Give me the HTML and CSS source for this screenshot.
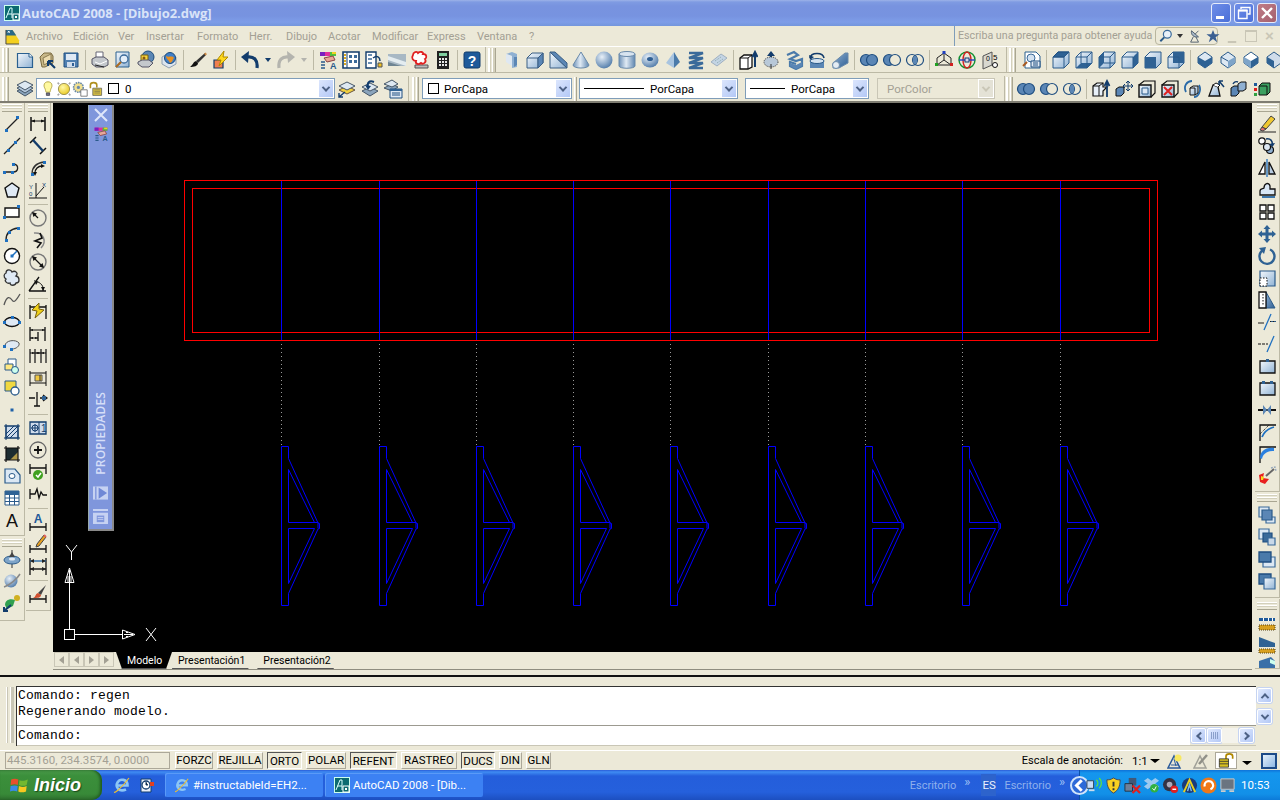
FILE: index.html
```html
<!DOCTYPE html>
<html lang="es">
<head>
<meta charset="utf-8">
<title>AutoCAD 2008 - [Dibujo2.dwg]</title>
<link rel="stylesheet" href="styles.css">
</head>
<body>
<svg class="defs" width="0" height="0" aria-hidden="true">
<defs>
<linearGradient id="gb" x1="0" y1="0" x2="1" y2="1"><stop offset="0" stop-color="#f4f8fc"/><stop offset="1" stop-color="#8fb2d4"/></linearGradient>
<linearGradient id="gd" x1="0" y1="0" x2="1" y2="1"><stop offset="0" stop-color="#8fb0d2"/><stop offset="1" stop-color="#2f5f94"/></linearGradient>
<linearGradient id="gg" x1="0" y1="0" x2="1" y2="0"><stop offset="0" stop-color="#6d91b8"/><stop offset=".45" stop-color="#e0eaf4"/><stop offset="1" stop-color="#5f86b0"/></linearGradient>
<radialGradient id="gs" cx=".38" cy=".32" r=".75"><stop offset="0" stop-color="#e8f0f8"/><stop offset="1" stop-color="#4a76a6"/></radialGradient>
<radialGradient id="gy" cx=".4" cy=".35" r=".7"><stop offset="0" stop-color="#fff8a8"/><stop offset="1" stop-color="#e8c820"/></radialGradient>

<symbol id="ie" viewBox="0 0 18 18"><path d="M4 9.500H14.500C14.500 3 7 2 4.500 6.500C2 11 6 16.500 13 13.500" fill="none" stroke="#8cc6f6" stroke-width="2.600"/><path d="M2 16C0 18 7 14 16 2" stroke="#f0c030" fill="none" stroke-width="1.200"/></symbol>
<symbol id="acad" viewBox="0 0 16 16"><rect width="16" height="16" fill="#0c6a70"/><rect x=".5" y=".5" width="15" height="15" fill="none" stroke="#cfe"/><path d="M2 13L6 3H8V13M3.500 9H8" stroke="#dff" fill="none"/><path d="M9 9H15V15H9Z" fill="none" stroke="#fff"/><rect x="11" y="11" width="2" height="2" fill="#fff"/></symbol>
<symbol id="new" viewBox="0 0 20 20"><path d="M2.500 3.500H14L17.500 7V17.500H2.500Z" fill="url(#gb)" stroke="#2a6090" stroke-width="1.200"/><path d="M14 3.500V7H17.500" fill="#fff" stroke="#2a6090"/></symbol>
<symbol id="open" viewBox="0 0 20 20"><path d="M2 7L6 3H13L15 6V13L7 17H4Z" fill="#c8b888" stroke="#7a6a40"/><path d="M5 8L13 4V11L6 15Z" fill="#ecdcae" stroke="#8a7a50"/><path d="M10 11L17 18M10 11V16M10 11H15" stroke="#123c6c" stroke-width="2" fill="none"/></symbol>
<symbol id="save" viewBox="0 0 20 20"><path d="M3 3H17V17H3Z" fill="#4f7fb0" stroke="#1f4e80"/><path d="M5 4H15V10H5Z" fill="#dfe9f4"/><path d="M6 12H14V17H6Z" fill="#cfdcec"/><path d="M11 13H13V16H11Z" fill="#2f5f94"/></symbol>
<symbol id="print" viewBox="0 0 20 20"><path d="M6 2H13V8H6Z" fill="#fff" stroke="#667"/><path d="M2 9L6 7H14L18 10V15L14 17H6L2 14Z" fill="#c4c8cc" stroke="#556"/><path d="M5 12L10 14L17 11" stroke="#fff" fill="none"/><path d="M5 15L14 17" stroke="#222" fill="none"/></symbol>
<symbol id="prev" viewBox="0 0 20 20"><path d="M3 2H16V17H3Z" fill="url(#gb)" stroke="#2a6090"/><circle cx="11" cy="9" r="4" fill="#e4eef8" stroke="#3a6a9a" stroke-width="1.300"/><path d="M8 12L3 17" stroke="#aa6a20" stroke-width="2.200"/></symbol>
<symbol id="pub" viewBox="0 0 20 20"><circle cx="12" cy="7" r="6" fill="#5a86b4" stroke="#1d4c7c"/><path d="M5 5H12V11H5Z" fill="#f6d43c" stroke="#7a6010"/><circle cx="8" cy="8" r="1.500" fill="#8a5a10"/><path d="M2 12L6 10H13L17 13L13 17H6L2 14Z" fill="#c4c8cc" stroke="#556"/></symbol>
<symbol id="web" viewBox="0 0 20 20"><path d="M3 7L10 3L17 7V14L10 18L3 14Z" fill="#dde5ee" stroke="#90a0b0"/><circle cx="11" cy="8" r="5.500" fill="#3f7fc8" stroke="#1d4c7c"/><path d="M7 6C10 8 13 5 15 8C13 10 14 12 11 13C10 10 7 9 7 6Z" fill="#e89020"/></symbol>
<symbol id="brush" viewBox="0 0 20 20"><path d="M17 3L8 11L10 13L18 5Z" fill="#333"/><path d="M17 3L18 5" stroke="#c84" stroke-width="2"/><path d="M8 11C5 12 5 15 2 17C6 17 10 16 10 13Z" fill="#111"/></symbol>
<symbol id="match" viewBox="0 0 20 20"><path d="M3 10H12V18H3Z" fill="#f08050" stroke="#123c6c" stroke-width="1.200"/><path d="M13 1L6 10H10L8 16L17 7H12Z" fill="#ffd81c" stroke="#b08a00"/></symbol>
<symbol id="undo" viewBox="0 0 20 20"><path d="M17 18C18 10 14 6 7 7" stroke="#123c6c" stroke-width="3.200" fill="none"/><path d="M9 1L1 7L8 13Z" fill="#123c6c"/></symbol>
<symbol id="redo" viewBox="0 0 20 20"><path d="M3 18C2 10 6 6 13 7" stroke="#b4b4ae" stroke-width="3.200" fill="none"/><path d="M11 1L19 7L12 13Z" fill="#b4b4ae"/></symbol>
<symbol id="dc" viewBox="0 0 20 20"><path d="M2 2H18V6H2Z" fill="#e0309c"/><path d="M2 2H7V6H2Z" fill="#7820c0"/><path d="M12 2H18V6H12Z" fill="#50c040"/><path d="M14 2H18V4H14Z" fill="#f0d020"/><path d="M6 8L15 6L17 10L9 12Z" fill="#e8a898" stroke="#844"/><path d="M3 12H7M3 15H7M3 18H7" stroke="#2a5a8a" stroke-width="1.400"/><text x="12" y="19" font-family="Liberation Sans" font-size="9" font-weight="700" fill="#2a5a8a">A</text></symbol>
<symbol id="prop" viewBox="0 0 20 20"><path d="M2 2H18V18H2Z" fill="#fff" stroke="#123c6c" stroke-width="1.600"/><path d="M6 2V18" stroke="#123c6c"/><path d="M4 4V16" stroke="#d8a820" stroke-width="2" stroke-dasharray="2 1"/><path d="M8 5H11V8H8ZM13 5H16V8H13ZM8 10H11V13H8ZM13 10H16V13H13Z" fill="#3a6a9a"/></symbol>
<symbol id="tool" viewBox="0 0 20 20"><path d="M2 2H12V18H2Z" fill="#fff" stroke="#123c6c" stroke-width="1.400"/><path d="M4 5H8M4 9H8M4 13H8" stroke="#3a6a9a" stroke-width="1.500"/><path d="M9 8C13 5 16 7 16 11" stroke="#123c6c" stroke-width="1.500" fill="none"/><path d="M14 13H18V17H14Z" fill="#f0c020" stroke="#555"/></symbol>
<symbol id="sheet" viewBox="0 0 20 20"><path d="M1 4H19V16H1Z" fill="#a8b8c4"/><path d="M1 6L19 12V16L1 10Z" fill="#e4ecf0"/><path d="M1 12L14 16H1Z" fill="#6e8492"/></symbol>
<symbol id="mark" viewBox="0 0 20 20"><path d="M5 15H18V18H5Z" fill="#bbb" stroke="#555"/><path d="M3 5C3 2 7 1 8 3C10 1 14 2 13 4C17 4 17 8 15 9C17 12 13 15 11 13C9 15 5 14 6 11C3 11 1 8 3 5Z" fill="#fff" stroke="#e02020" stroke-width="1.800"/></symbol>
<symbol id="calc" viewBox="0 0 20 20"><path d="M4 1H16V19H4Z" fill="#222"/><path d="M6 3H14V6H6Z" fill="#80d0a0"/><path d="M6 8H8V10H6ZM9 8H11V10H9ZM12 8H14V10H12ZM6 11H8V13H6ZM9 11H11V13H9ZM12 11H14V13H12ZM6 14H8V16H6ZM9 14H11V16H9ZM12 14H14V16H12Z" fill="#e8e8e8"/></symbol>
<symbol id="help" viewBox="0 0 20 20"><rect x="2" y="2" width="16" height="16" rx="2" fill="#1f5a9a" stroke="#123c6c"/><text x="10" y="16" text-anchor="middle" font-family="Liberation Sans" font-size="14" font-weight="700" fill="#fff">?</text></symbol>

<symbol id="psolid" viewBox="0 0 20 20"><path d="M4 4L10 2L15 4V17L10 18V6L4 4Z" fill="#8fb0d2"/><path d="M4 4V12L10 16V6Z" fill="#dfe8f2"/><path d="M12 7L15 7V15L12 17Z" fill="#5b86b5"/></symbol>
<symbol id="box" viewBox="0 0 20 20"><path d="M2 8L7 3H18V13L13 18H2Z" fill="url(#gb)" stroke="#3a5e84"/><path d="M2 8H13V18" fill="none" stroke="#3a5e84"/><path d="M13 8L18 3V13L13 18Z" fill="#5b86b5" stroke="#3a5e84"/></symbol>
<symbol id="wedge" viewBox="0 0 20 20"><path d="M2 2V18H19Z" fill="url(#gb)" stroke="#3a5e84"/><path d="M2 2L7 2L19 13V18Z" fill="#5b86b5" stroke="#3a5e84"/></symbol>
<symbol id="cone" viewBox="0 0 20 20"><path d="M10 2L2 15C2 19 18 19 18 15Z" fill="url(#gg)" stroke="#6a8aaa"/></symbol>
<symbol id="sphere" viewBox="0 0 20 20"><circle cx="10" cy="10" r="8.500" fill="url(#gs)"/></symbol>
<symbol id="cyl" viewBox="0 0 20 20"><path d="M2 4V16C2 19 18 19 18 16V4Z" fill="url(#gg)" stroke="#6a8aaa"/><ellipse cx="10" cy="4" rx="8" ry="2.500" fill="#d8e4f0" stroke="#6a8aaa"/></symbol>
<symbol id="torus" viewBox="0 0 20 20"><ellipse cx="10" cy="10" rx="8.500" ry="7.500" fill="url(#gs)"/><ellipse cx="10" cy="9" rx="3" ry="2" fill="#2f5f94"/></symbol>
<symbol id="pyr" viewBox="0 0 20 20"><path d="M11 2L3 13L11 18Z" fill="#a8c4e0"/><path d="M11 2L17 12L11 18Z" fill="#4a7aaa"/></symbol>
<symbol id="helix" viewBox="0 0 20 20"><path d="M3 3H17L3 8H17L3 13H17L3 18H17" fill="none" stroke="#3a6a9a" stroke-width="2.400"/></symbol>
<symbol id="planar" viewBox="0 0 20 20"><path d="M2 12L12 4L18 8L8 16Z" fill="#c4d4e4" stroke="#a0b0c0"/><path d="M6 11L12 7M8 13L14 9" stroke="#8aa" stroke-dasharray="1 1"/></symbol>
<symbol id="extr" viewBox="0 0 20 20"><path d="M2 8L6 5H14V17L10 19H2Z" fill="#fff" stroke="#111" stroke-width="1.300"/><path d="M2 8H10V19M10 8L14 5" fill="none" stroke="#111"/><path d="M17 17V3M14.500 7L17 2L19.500 7" fill="none" stroke="#123c6c" stroke-width="2"/></symbol>
<symbol id="press" viewBox="0 0 20 20"><path d="M10 1L6 6H14Z" fill="#123c6c"/><path d="M10 5V11" stroke="#123c6c" stroke-width="2"/><ellipse cx="10" cy="12" rx="7" ry="5" fill="#b8c8d8" stroke="#333" stroke-dasharray="1 1"/><path d="M10 19V14" stroke="#333"/></symbol>
<symbol id="sweep" viewBox="0 0 20 20"><path d="M3 5L10 2L14 5L6 9L12 11L18 9V16L12 19L6 16V12L12 14" fill="none" stroke="#4a7aaa" stroke-width="2.200"/><path d="M6 13L12 15L18 12V16L12 19L6 16Z" fill="#5b86b5"/></symbol>
<symbol id="rev" viewBox="0 0 20 20"><path d="M3 8C4 2 16 2 17 8" fill="none" stroke="#123c6c" stroke-width="1.600"/><path d="M2 5L3 10L7 7Z" fill="#123c6c"/><path d="M3 11H17V18H3Z" fill="#5b86b5"/><ellipse cx="10" cy="11" rx="7" ry="2.500" fill="#d4e2f0" stroke="#2a5a8a"/></symbol>
<symbol id="loft" viewBox="0 0 20 20"><path d="M3 13L15 3H18V13L9 18H3Z" fill="url(#gd)" stroke="#6a8aaa"/><ellipse cx="6" cy="15" rx="3.500" ry="3.500" fill="#e4ecf4" stroke="#6a8aaa"/></symbol>
<symbol id="union" viewBox="0 0 20 20"><circle cx="7" cy="10" r="5.500" fill="#5b86b5" stroke="#1f4e80" stroke-width="1.200"/><circle cx="13" cy="10" r="5.500" fill="#5b86b5" stroke="#1f4e80" stroke-width="1.200"/></symbol>
<symbol id="subt" viewBox="0 0 20 20"><circle cx="7" cy="10" r="5.500" fill="#5b86b5" stroke="#1f4e80" stroke-width="1.200"/><circle cx="13" cy="10" r="5.500" fill="#ece9d8" stroke="#1f4e80" stroke-width="1.200"/></symbol>
<symbol id="inter" viewBox="0 0 20 20"><circle cx="7" cy="10" r="5.500" fill="#ece9d8" stroke="#1f4e80" stroke-width="1.200"/><circle cx="13" cy="10" r="5.500" fill="none" stroke="#1f4e80" stroke-width="1.200"/><path d="M10 5.500A5.500 5.500 0 0 1 10 14.500A5.500 5.500 0 0 1 10 5.500Z" fill="#5b86b5"/></symbol>
<symbol id="giz" viewBox="0 0 20 20"><path d="M10 3L17 8V15H3V8Z" fill="none" stroke="#222"/><path d="M10 10V3M10 10L3 15M10 10L17 15" stroke="#222"/><rect x="8.500" y="1" width="3" height="3" fill="#2040c0"/><rect x="16" y="13" width="3" height="3" fill="#d02020"/><rect x="1" y="13" width="3" height="3" fill="#20a020"/></symbol>
<symbol id="wrld" viewBox="0 0 20 20"><ellipse cx="10" cy="10" rx="8" ry="8" fill="none" stroke="#109030" stroke-width="1.400"/><ellipse cx="10" cy="10" rx="4" ry="8" fill="none" stroke="#d02020" stroke-width="1.400"/><path d="M2 10H18" stroke="#2040c0" stroke-width="1.400"/><rect x="8" y="8" width="4" height="4" fill="#d8d8f0" stroke="#123c6c"/></symbol>
<symbol id="flat" viewBox="0 0 20 20"><path d="M3 6L12 2V15L3 19Z" fill="#d8d8d0" stroke="#555"/><text x="6" y="11" font-family="Liberation Sans" font-size="7" fill="#000">0</text><circle cx="15" cy="15" r="2.500" fill="#fff" stroke="#111"/><text x="13" y="10" font-family="Liberation Sans" font-size="8" fill="#000">5</text></symbol>

<symbol id="cam" viewBox="0 0 20 20"><path d="M3 2H14L18 6V18H3Z" fill="#fff" stroke="#2a6090"/><circle cx="9" cy="8" r="4" fill="#d4e2f0" stroke="#3a6a9a"/><path d="M5 12L1 16" stroke="#aa5a20" stroke-width="2"/><path d="M9 11H18V17H9Z" fill="#dfe9f4" stroke="#1f4e80"/><path d="M11 13H16M11 15H16" stroke="#1f4e80"/></symbol>
<symbol id="vt" viewBox="0 0 20 20"><path d="M2 7V18H13L18 13V2H7Z" fill="url(#gb)" stroke="#2a5a8a"/><path d="M2 7L7 2H18L13 7Z" fill="#2f6294" stroke="#1f4e80"/><path d="M2 7H13V18M13 7L18 2" fill="none" stroke="#2a5a8a"/></symbol>
<symbol id="vb" viewBox="0 0 20 20"><path d="M2 7V18H13L18 13V2H7Z" fill="url(#gb)" stroke="#2a5a8a"/><path d="M2 18L7 13H18L13 18Z" fill="#2f6294"/><path d="M2 7H13V18M7 2V13M13 7L18 2" fill="none" stroke="#2a5a8a"/></symbol>
<symbol id="vl" viewBox="0 0 20 20"><path d="M2 7V18H13L18 13V2H7Z" fill="url(#gb)" stroke="#2a5a8a"/><path d="M2 7L7 2V13L2 18Z" fill="#2f6294"/><path d="M2 7H13V18M7 13H18M13 7L18 2" fill="none" stroke="#2a5a8a"/></symbol>
<symbol id="vr" viewBox="0 0 20 20"><path d="M2 7V18H13L18 13V2H7Z" fill="url(#gb)" stroke="#2a5a8a"/><path d="M13 7L18 2V13L13 18Z" fill="#2f6294"/><path d="M2 7H13V18M2 7L7 2" fill="none" stroke="#2a5a8a"/></symbol>
<symbol id="vf" viewBox="0 0 20 20"><path d="M2 7V18H13L18 13V2H7Z" fill="url(#gb)" stroke="#2a5a8a"/><path d="M2 7H13V18H2Z" fill="#2f6294"/></symbol>
<symbol id="vk" viewBox="0 0 20 20"><path d="M2 7V18H13L18 13V2H7Z" fill="url(#gb)" stroke="#2a5a8a"/><path d="M7 2H18V13H7Z" fill="#2f6294"/><path d="M2 7H13V18" fill="none" stroke="#2a5a8a"/></symbol>
<symbol id="iso1" viewBox="0 0 20 20"><path d="M10 2L17 7V13L10 18L3 13V7Z" fill="#dde8f2" stroke="#2a5a8a"/><path d="M3 7L10 11L17 7V13L10 18L3 13Z" fill="#2f6294"/></symbol>
<symbol id="iso2" viewBox="0 0 20 20"><path d="M10 2L17 7V13L10 18L3 13V7Z" fill="#dde8f2" stroke="#2a5a8a"/><path d="M10 11L17 7V13L10 18Z" fill="#7ea4c8"/><path d="M3 7L10 11" stroke="#2a5a8a"/></symbol>
<symbol id="iso3" viewBox="0 0 20 20"><path d="M10 2L17 7V13L10 18L3 13V7Z" fill="#fff" stroke="#2a5a8a"/><path d="M3 7L10 11V18L3 13Z" fill="#7ea4c8"/><path d="M10 11L17 7V13L10 18Z" fill="#2f6294"/></symbol>
<symbol id="iso4" viewBox="0 0 20 20"><path d="M10 2L17 7V13L10 18L3 13V7Z" fill="#cfdcea" stroke="#2a5a8a"/><path d="M3 7L10 11V18L3 13Z" fill="#2f6294"/></symbol>

<symbol id="layers" viewBox="0 0 20 20"><path d="M2 12L10 8L18 12L10 17Z" fill="#8aa4bc" stroke="#456"/><path d="M2 9L10 5L18 9L10 14Z" fill="#b4c8dc" stroke="#456"/><path d="M2 6L10 2L18 6L10 11Z" fill="#dde8f2" stroke="#456"/></symbol>
<symbol id="lcur" viewBox="0 0 20 20"><path d="M2 11L10 7L18 11L10 15Z" fill="#f0d040" stroke="#654"/><path d="M2 7L10 3L18 7L10 11Z" fill="#dde8f2" stroke="#456"/><path d="M2 18L8 13M2 14V18H6" stroke="#123c6c" stroke-width="1.400" fill="none"/></symbol>
<symbol id="lprev" viewBox="0 0 20 20"><path d="M2 12L10 8L18 12L10 17Z" fill="#8aa4bc" stroke="#456"/><path d="M2 8L10 4L18 8L10 12Z" fill="#dde8f2" stroke="#456"/><path d="M14 3C9 1 7 4 8 8" stroke="#123c6c" stroke-width="2" fill="none"/><path d="M5 6L8 11L11 7Z" fill="#123c6c"/></symbol>
<symbol id="lstate" viewBox="0 0 20 20"><path d="M1 9L9 5L15 8L9 12Z" fill="#8aa4bc" stroke="#456"/><path d="M1 5L9 1L15 5L9 8Z" fill="#dde8f2" stroke="#456"/><path d="M7 10H19V19H7Z" fill="#dfe9f4" stroke="#1f4e80"/><path d="M7 10H19V12H7Z" fill="#2f6294"/><path d="M9 14H17M9 16H17" stroke="#1f4e80"/></symbol>
<symbol id="bulb" viewBox="0 0 20 20"><path d="M10 1C5 1 4 6 6 9C7 11 7 13 7.500 14H12.500C13 13 13 11 14 9C16 6 15 1 10 1Z" fill="#fff9a0" stroke="#a89830"/><path d="M8 15H12V18H8Z" fill="#778" stroke="#445"/></symbol>
<symbol id="sun" viewBox="0 0 20 20"><circle cx="10" cy="10" r="7" fill="url(#gy)" stroke="#8a8040"/><path d="M2 2L4 4M18 2L16 4M2 18L4 16M18 18L16 16" stroke="#a8a8a8" stroke-width="2"/></symbol>
<symbol id="frz" viewBox="0 0 20 20"><circle cx="8" cy="8" r="6" fill="#f2e090" stroke="#6a8aaa" stroke-dasharray="2 1" stroke-width="2"/><circle cx="8" cy="8" r="2" fill="#6a8aaa"/><path d="M11 11H19V19H11Z" fill="#fff" stroke="#666"/></symbol>
<symbol id="lock" viewBox="0 0 20 20"><path d="M3 9V5C3 1 11 1 11 5V8" fill="none" stroke="#b09020" stroke-width="2"/><path d="M6 9H17V18H6Z" fill="#d8c040" stroke="#665"/><path d="M8 11H15M8 13H15M8 15H15" stroke="#665" stroke-width=".7"/></symbol>

<symbol id="ln" viewBox="0 0 20 20"><path d="M4 16L16 4" stroke="#222" stroke-width="1.300"/><path d="M3 15H6V18H3ZM14 2H17V5H14Z" fill="#1f70c0"/></symbol>
<symbol id="xl" viewBox="0 0 20 20"><path d="M2 18L18 2" stroke="#222" stroke-width="1.300"/><path d="M5 13H8V16H5ZM12 5H15V8H12Z" fill="#1f70c0"/></symbol>
<symbol id="pl" viewBox="0 0 20 20"><path d="M4 14H11M11 14C17 14 17 7 12 6" fill="none" stroke="#222" stroke-width="1.300"/><path d="M1 13H4V16H1ZM9 13H12V16H9ZM10 5H13V8H10Z" fill="#1f70c0"/></symbol>
<symbol id="pg" viewBox="0 0 20 20"><path d="M10 3L17 8L14.500 17H5.500L3 8Z" fill="#dfe9f4" stroke="#111" stroke-width="1.400"/></symbol>
<symbol id="rc" viewBox="0 0 20 20"><path d="M3 6H17V15H3Z" fill="#fff" stroke="#111" stroke-width="1.400"/><path d="M1 14H4V17H1ZM15 3H18V6H15Z" fill="#1f70c0"/></symbol>
<symbol id="ar" viewBox="0 0 20 20"><path d="M4 16C4 9 9 5 16 4" fill="none" stroke="#222" stroke-width="1.400"/><path d="M3 15H6V18H3ZM15 3H18V6H15ZM6 7H9V10H6Z" fill="#1f70c0"/></symbol>
<symbol id="ci" viewBox="0 0 20 20"><circle cx="10" cy="10" r="7.500" fill="#fff" stroke="#111" stroke-width="1.400"/><path d="M10 10L15 5" stroke="#1f70c0" stroke-width="1.500"/><path d="M8.500 8.500H11.500V11.500H8.500Z" fill="#1f70c0"/></symbol>
<symbol id="cl" viewBox="0 0 20 20"><path d="M4 5C4 1 9 1 10 4C13 2 17 5 14 8C18 9 18 15 14 15C13 18 8 18 8 15C5 16 2 13 4 11C1 9 2 6 4 5Z" fill="#dfe9f4" stroke="#333" stroke-width="1.300"/></symbol>
<symbol id="sp" viewBox="0 0 20 20"><path d="M2 15C5 5 8 7 10 10C12 14 15 9 18 4" fill="none" stroke="#555" stroke-width="1.300"/></symbol>
<symbol id="el" viewBox="0 0 20 20"><ellipse cx="10" cy="10" rx="7.500" ry="4.500" fill="#dfe9f4" stroke="#111" stroke-width="1.300"/><path d="M1 9H4V12H1ZM16 9H19V12H16ZM9 4H12V7H9Z" fill="#1f70c0"/></symbol>
<symbol id="ea" viewBox="0 0 20 20"><path d="M3 12C3 6 14 5 17 9C18 12 14 15 10 15" fill="#dfe9f4" stroke="#555"/><path d="M1 11H4V14H1ZM8 14H11V17H8Z" fill="#1f70c0"/></symbol>
<symbol id="ins" viewBox="0 0 20 20"><path d="M6 3H14V12H6Z" fill="#fff" stroke="#2a5a8a"/><path d="M3 8H11V14H3Z" fill="#ffe880" stroke="#2a5a8a"/><circle cx="13" cy="14" r="3.500" fill="#cfe" stroke="#2a5a8a"/></symbol>
<symbol id="blk" viewBox="0 0 20 20"><path d="M3 3H14V13H3Z" fill="#f0d840" stroke="#2a5a8a"/><circle cx="13" cy="13" r="4" fill="#fff" stroke="#2a5a8a" stroke-width="1.300"/></symbol>
<symbol id="pt" viewBox="0 0 20 20"><path d="M8.500 8.500H11.500V11.500H8.500Z" fill="#1f60a8"/></symbol>
<symbol id="hat" viewBox="0 0 20 20"><path d="M4 4H16V16H4Z" fill="#cfdcec" stroke="#123c6c" stroke-width="1.200"/><path d="M4 16L16 4M4 12L12 4M8 16L16 8" stroke="#123c6c"/><path d="M2 4H18M2 16H18M4 2V18M16 2V18" stroke="#123c6c"/></symbol>
<symbol id="grd" viewBox="0 0 20 20"><path d="M4 4H16V16H4Z" fill="#1d2c30"/><path d="M8 16L16 8V16Z" fill="#b09848"/><path d="M2 4H18M2 16H18M4 2V18M16 2V18" stroke="#111" stroke-width="1.200"/></symbol>
<symbol id="reg" viewBox="0 0 20 20"><path d="M3 3H13L18 9V17H3Z" fill="#dce8f4" stroke="#2a5a8a" stroke-width="1.200"/><ellipse cx="10" cy="10" rx="3" ry="2.500" fill="#fff" stroke="#2a5a8a"/></symbol>
<symbol id="tbl" viewBox="0 0 20 20"><path d="M3 3H17V17H3Z" fill="#fff" stroke="#2a5a8a"/><path d="M3 3H17V7H3Z" fill="#2f6294"/><path d="M3 10H17M3 13.500H17M7.500 7V17M12.500 7V17" stroke="#2a5a8a"/></symbol>
<symbol id="txt" viewBox="0 0 20 20"><text x="10" y="17" text-anchor="middle" font-family="Liberation Sans" font-size="18" fill="#111">A</text></symbol>
<symbol id="orb" viewBox="0 0 20 20"><path d="M10 1V19" stroke="#333"/><ellipse cx="10" cy="11" rx="8" ry="4" fill="#7ea4c8" stroke="#2a5a8a"/><path d="M7 8H13L10 3Z" fill="#444"/><ellipse cx="10" cy="10" rx="3" ry="1.500" fill="#dfe9f4"/></symbol>
<symbol id="plan" viewBox="0 0 20 20"><circle cx="9" cy="10" r="6.500" fill="url(#gs)"/><path d="M2 16C8 14 15 8 18 3" stroke="#888" stroke-width="1.500" fill="none"/></symbol>
<symbol id="walk" viewBox="0 0 20 20"><path d="M3 12C3 7 8 5 13 7L11 13L5 16Z" fill="#30a050"/><circle cx="15" cy="5" r="3" fill="#d0b020"/><path d="M2 18L9 12M2 14V18H6" stroke="#123c6c" stroke-width="2" fill="none"/></symbol>

<symbol id="d1" viewBox="0 0 20 20"><path d="M3 3V17M17 3V17" stroke="#111" stroke-width="1.500"/><path d="M3 7H17" stroke="#111"/><path d="M3 7L7 5.500V8.500ZM17 7L13 5.500V8.500Z" fill="#111"/></symbol>
<symbol id="d2" viewBox="0 0 20 20"><path d="M2 7L8 1M12 18L18 12" stroke="#111" stroke-width="1.500"/><path d="M5 4L15 15" stroke="#123c6c" stroke-width="2.400"/></symbol>
<symbol id="d3" viewBox="0 0 20 20"><path d="M4 16C4 9 9 5 16 4" fill="none" stroke="#333" stroke-width="1.300"/><path d="M7 15C7 11 10 8 14 8" fill="none" stroke="#111" stroke-width="1.300"/><path d="M3 15H6V18H3ZM15 3H18V6H15Z" fill="#1f70c0"/><path d="M5 14L9 14L7 18ZM13 6L13 10L17 8Z" fill="#111"/></symbol>
<symbol id="d4" viewBox="0 0 20 20"><path d="M1 18H19M8 3V18" stroke="#111"/><path d="M8 16L16 7" stroke="#111"/><text x="1" y="9" font-family="Liberation Sans" font-size="6" fill="#123c6c">Y</text><text x="14" y="7" font-family="Liberation Sans" font-size="6" fill="#123c6c">X</text><text x="1" y="16" font-family="Liberation Sans" font-size="6" fill="#123c6c">0</text></symbol>
<symbol id="d5" viewBox="0 0 20 20"><circle cx="10" cy="10" r="8" fill="none" stroke="#777" stroke-width="1.400"/><path d="M10 10L5 5" stroke="#111" stroke-width="1.300"/><path d="M4 4L9 5.500L5.500 9Z" fill="#111"/></symbol>
<symbol id="d6" viewBox="0 0 20 20"><path d="M6 3C16 2 19 12 13 18" fill="none" stroke="#888" stroke-width="1.500"/><path d="M12 3L14 8L7 11L13 13L9 18" fill="none" stroke="#111" stroke-width="1.600"/></symbol>
<symbol id="d7" viewBox="0 0 20 20"><circle cx="10" cy="10" r="8" fill="none" stroke="#777" stroke-width="1.400"/><path d="M5 5L15 15" stroke="#111" stroke-width="1.300"/><path d="M4 4L9 5.500L5.500 9ZM16 16L11 14.500L14.500 11Z" fill="#111"/></symbol>
<symbol id="d8" viewBox="0 0 20 20"><path d="M1 17H18M1 17L11 3" stroke="#111" stroke-width="1.300"/><path d="M8 7C13 9 16 12 15 17" fill="none" stroke="#111"/><path d="M6 6L10 8L8 11ZM15 17L13 13L17 13Z" fill="#111"/></symbol>
<symbol id="d9" viewBox="0 0 20 20"><path d="M2 3V17M18 3V17M2 5H18" stroke="#111" stroke-width="1.300"/><path d="M11 1L4 8L9 9L7 16L16 8L11 7Z" fill="#f0d018" stroke="#776010"/></symbol>
<symbol id="d10" viewBox="0 0 20 20"><path d="M2 3V17M10 8V17M17 3V17" stroke="#111" stroke-width="1.300"/><path d="M2 6H17M2 14H10" stroke="#111"/><path d="M2 6L5 5V7ZM17 6L14 5V7ZM2 14L5 13V15ZM10 14L7 13V15Z" fill="#111"/></symbol>
<symbol id="d11" viewBox="0 0 20 20"><path d="M2 3V17M7 3V17M13 3V17M18 3V17" stroke="#111" stroke-width="1.200"/><path d="M2 7H18" stroke="#111"/><path d="M7 7L4 6V8ZM7 7L10 6V8ZM13 7L10 6V8ZM13 7L16 6V8Z" fill="#111"/></symbol>
<symbol id="d12" viewBox="0 0 20 20"><path d="M2 3V18M18 3V18M2 5H18M2 15H18" stroke="#111"/><path d="M7 7H14V13H7Z" fill="#f0c840" stroke="#555"/><path d="M11 8H13M11 10H13M11 12H13" stroke="#333"/></symbol>
<symbol id="d13" viewBox="0 0 20 20"><path d="M1 8H7M12 8H19M15 5L19 8L15 11M9 2V16M6 16H12" stroke="#111" stroke-width="1.300" fill="none"/><path d="M14 6H18V10H14Z" fill="#2f6294"/></symbol>
<symbol id="d14" viewBox="0 0 20 20"><path d="M2 4H18V16H2Z" fill="#cfdcec" stroke="#123c6c" stroke-width="1.300"/><path d="M11 4V16" stroke="#123c6c"/><circle cx="7" cy="10" r="3" fill="none" stroke="#123c6c"/><path d="M7 6V14M3 10H11" stroke="#123c6c"/><text x="13" y="14" font-family="Liberation Sans" font-size="10" fill="#123c6c">1</text></symbol>
<symbol id="d15" viewBox="0 0 20 20"><circle cx="10" cy="10" r="8" fill="none" stroke="#666" stroke-width="1.300"/><path d="M10 6V14M6 10H14" stroke="#111" stroke-width="1.800"/></symbol>
<symbol id="d16" viewBox="0 0 20 20"><path d="M2 2V12M18 2V12M2 6H18" stroke="#111" stroke-width="1.300"/><circle cx="10" cy="13" r="5" fill="#40a020"/><path d="M8 13L10 15L13 11" stroke="#fff" stroke-width="1.500" fill="none"/></symbol>
<symbol id="d17" viewBox="0 0 20 20"><path d="M2 5V15M2 10H7L9 5L11 14L13 8L15 11H19" fill="none" stroke="#111" stroke-width="1.300"/></symbol>
<symbol id="d18" viewBox="0 0 20 20"><path d="M2 11V19M18 11V19M2 15H18" stroke="#111" stroke-width="1.300"/><text x="10" y="11" text-anchor="middle" font-family="Liberation Sans" font-size="12" font-weight="700" fill="#1f5a9a">A</text></symbol>
<symbol id="d19" viewBox="0 0 20 20"><path d="M2 11V19M18 11V19M2 15H18" stroke="#111" stroke-width="1.300"/><path d="M16 1L18 3L11 12L8 13L9 10Z" fill="#e8a020" stroke="#444"/><path d="M16 1L18 3" stroke="#e06060" stroke-width="2"/></symbol>
<symbol id="d20" viewBox="0 0 20 20"><path d="M2 2V19M18 2V19" stroke="#111" stroke-width="1.300"/><path d="M2 5H18" stroke="#2a6aa8" stroke-width="1.400"/><path d="M2 13H18" stroke="#111" stroke-width="1.400"/><path d="M2 5L6 3V7ZM18 5L14 3V7ZM2 13L6 11V15ZM18 13L14 11V15Z" fill="#222"/></symbol>
<symbol id="d21" viewBox="0 0 20 20"><path d="M2 11V19M18 11V19M2 15H18" stroke="#111" stroke-width="1.300"/><path d="M18 1L10 9L13 11Z" fill="#444"/><path d="M10 9C7 10 8 13 5 14C9 14 13 14 13 11Z" fill="#d05030"/></symbol>

<symbol id="r1" viewBox="0 0 20 20"><path d="M14 2L18 5L9 15L5 13Z" fill="#f0c830" stroke="#444"/><path d="M5 13L9 15L6 17L3 16Z" fill="#e07070" stroke="#444"/><path d="M1 18H19" stroke="#222"/></symbol>
<symbol id="r2" viewBox="0 0 20 20"><circle cx="5" cy="5" r="3.200" fill="#fff" stroke="#111" stroke-width="1.200"/><circle cx="13" cy="14" r="3.500" fill="#8fb0d2" stroke="#111" stroke-width="1.200"/><circle cx="10" cy="11" r="3.500" fill="#dfe9f4" stroke="#111" stroke-width="1.200"/><path d="M9 3C14 2 16 6 15 9" stroke="#123c6c" stroke-width="1.500" fill="none"/><path d="M12 8L15.500 11L18 7Z" fill="#123c6c"/></symbol>
<symbol id="r3" viewBox="0 0 20 20"><path d="M8 4L2 16H8Z" fill="#fff" stroke="#111" stroke-width="1.300"/><path d="M12 4L18 16H12Z" fill="#b8cce0" stroke="#111" stroke-width="1.300"/><path d="M10 1V19" stroke="#1f70c0" stroke-width="1.300"/></symbol>
<symbol id="r4" viewBox="0 0 20 20"><path d="M3 15V11C3 8 6 9 7 8C7 3 12 2 13 6V9H18V15Z" fill="#d8e6f4" stroke="#111" stroke-width="1.300"/><path d="M5 17H18" stroke="#2a6aa8" stroke-width="1.800"/></symbol>
<symbol id="r5" viewBox="0 0 20 20"><path d="M3 3H9V9H3ZM11 3H17V9H11ZM3 11H9V17H3ZM11 11H17V17H11Z" fill="#fff" stroke="#111" stroke-width="1.300"/></symbol>
<symbol id="r6" viewBox="0 0 20 20"><path d="M10 1L13.500 5H11.500V8.500H15V6.500L19 10L15 13.500V11.500H11.500V15H13.500L10 19L6.500 15H8.500V11.500H5V13.500L1 10L5 6.500V8.500H8.500V5H6.500Z" fill="#2f6294"/></symbol>
<symbol id="r7" viewBox="0 0 20 20"><path d="M6 4A7.500 7.500 0 1 0 13 3.500" fill="none" stroke="#2f6294" stroke-width="2.400"/><path d="M2 2L9 1L7 8Z" fill="#2f6294"/></symbol>
<symbol id="r8" viewBox="0 0 20 20"><path d="M3 3H18V18H3Z" fill="url(#gb)" stroke="#2a5a8a" stroke-width="1.200"/><path d="M3 10H10V18H3Z" fill="#fff" stroke="#111" stroke-dasharray="1.500 1.500"/></symbol>
<symbol id="r9" viewBox="0 0 20 20"><path d="M9 2L18 18H9Z" fill="url(#gd)" stroke="#2a5a8a"/><path d="M2 2H9V18H2Z" fill="#fff" stroke="#111" stroke-width="1.300"/><path d="M6 4V16" stroke="#111" stroke-dasharray="1.500 1.500"/></symbol>
<symbol id="r10" viewBox="0 0 20 20"><path d="M1 11H7M13 9.500H19" stroke="#1c1c1c" stroke-width="1.200"/><path d="M14 2L7 18" stroke="#1f70c0" stroke-width="1.300"/><path d="M14 9.500H19" stroke="#2a5a8a" stroke-dasharray="2 1" stroke-width="1.200"/></symbol>
<symbol id="r11" viewBox="0 0 20 20"><path d="M1 10H11" stroke="#111" stroke-width="1.200" stroke-dasharray="3 1"/><path d="M17 2L10 18" stroke="#1f70c0" stroke-width="1.300"/></symbol>
<symbol id="r12" viewBox="0 0 20 20"><path d="M3 5H18V17H3Z" fill="url(#gb)" stroke="#111" stroke-width="1.300"/><path d="M9 3H12V6H9Z" fill="#2f6294"/></symbol>
<symbol id="r13" viewBox="0 0 20 20"><path d="M3 5H18V17H3Z" fill="url(#gb)" stroke="#111" stroke-width="1.300"/><path d="M5 3H8V6H5ZM13 3H16V6H13Z" fill="#2f6294"/></symbol>
<symbol id="r14" viewBox="0 0 20 20"><path d="M1 10H19" stroke="#111" stroke-width="2"/><path d="M6 5L10 10L6 15ZM14 5L10 10L14 15Z" fill="#5b86b5"/></symbol>
<symbol id="r15" viewBox="0 0 20 20"><path d="M3 19V3H19" fill="none" stroke="#111" stroke-width="1.300"/><path d="M3 12L12 3" stroke="#111" stroke-dasharray="1 1"/><path d="M5 15C7 10 10 7 17 5" stroke="#1f70c0" stroke-width="1.800" fill="none"/></symbol>
<symbol id="r16" viewBox="0 0 20 20"><path d="M3 19V3H19" fill="none" stroke="#111" stroke-width="1.300"/><path d="M3 14C3 8 8 3 17 4V7C10 7 6 10 5 15Z" fill="#2a80e0"/></symbol>
<symbol id="r17" viewBox="0 0 20 20"><path d="M2 9L7 7L6 12L12 13L8 18L3 16Z" fill="#e82020"/><path d="M4 10L7 11L6 14H4Z" fill="#f8d820"/><path d="M9 10L17 3" stroke="#666" stroke-width="2"/><path d="M14 2L18 1L19 5" stroke="#9ab" stroke-width="1.400" fill="none" stroke-dasharray="2 1"/></symbol>
<symbol id="o1" viewBox="0 0 20 20"><path d="M2 2H12V12H2Z" fill="#dce8f4" stroke="#3a6a9a" stroke-width="1.200"/><path d="M9 12H18V18H9Z" fill="#dce8f4" stroke="#3a6a9a" stroke-width="1.200"/><path d="M5 5H15V15H5Z" fill="#5b86b5" stroke="#2a5a8a" stroke-width="1.200"/></symbol>
<symbol id="o2" viewBox="0 0 20 20"><path d="M2 2H12V12H2Z" fill="#dce8f4" stroke="#3a6a9a" stroke-width="1.200"/><path d="M6 6H15V15H6Z" fill="#3a6a9a" stroke="#1f4e80" stroke-width="1.200"/><path d="M11 11H18V18H11Z" fill="#c8d8e8" stroke="#3a6a9a" stroke-width="1.200"/></symbol>
<symbol id="o3" viewBox="0 0 20 20"><path d="M6 8H18V18H6Z" fill="#dce8f4" stroke="#3a6a9a" stroke-width="1.200"/><path d="M2 3H14V13H2Z" fill="#4a7aaa" stroke="#1f4e80" stroke-width="1.300"/></symbol>
<symbol id="o4" viewBox="0 0 20 20"><path d="M2 3H14V13H2Z" fill="#4a7aaa" stroke="#1f4e80" stroke-width="1.300"/><path d="M7 7H18V18H7Z" fill="url(#gb)" stroke="#3a6a9a" stroke-width="1.200"/></symbol>
<symbol id="t1" viewBox="0 0 20 20"><path d="M2 5H18V8H2Z" fill="#1f5a9a"/><path d="M6 5H7V8H6ZM11 5H12V8H11ZM15 5H16V8H15Z" fill="#fff"/><path d="M2 12H18V17H2Z" fill="#d8a020" stroke="#554010" stroke-dasharray="1 1"/></symbol>
<symbol id="t2" viewBox="0 0 20 20"><path d="M2 2L18 8V12H2Z" fill="#2f6294"/><path d="M2 14H18V18H2Z" fill="#d8a020" stroke="#554010" stroke-dasharray="1 1"/></symbol>
<symbol id="t3" viewBox="0 0 20 20"><path d="M2 6L14 2L18 6V14H2Z" fill="#3a70a8"/><path d="M13 4L18 6V10L13 8Z" fill="#cfe"/></symbol>
<symbol id="s1" viewBox="0 0 20 20"><path d="M2 7L6 4H12V8H16L12 12V17H2Z" fill="#e8f0f8" stroke="#111" stroke-width="1.200"/><path d="M2 7H8V17M8 7L12 4" fill="none" stroke="#111"/><path d="M16 18V4M13.500 7L16 2L18.500 7" stroke="#123c6c" stroke-width="1.800" fill="none"/></symbol>
<symbol id="s2" viewBox="0 0 20 20"><path d="M2 10L5 8H10V14L7 17H2Z" fill="#5b86b5" stroke="#111"/><path d="M14 2V12M9 7H19M14 2L12 4M14 2L16 4M14 12L12 10M14 12L16 10M9 7L11 5M9 7L11 9M19 7L17 5M19 7L17 9" stroke="#123c6c" fill="none"/></symbol>
<symbol id="s3" viewBox="0 0 20 20"><path d="M2 6H14V18H2Z" fill="url(#gb)" stroke="#111" stroke-width="1.400"/><path d="M2 6L7 2H18V14L14 18" fill="none" stroke="#111" stroke-width="1.200"/><path d="M5 9H11V15H5Z" fill="#dce8f4" stroke="#2a5a8a"/></symbol>
<symbol id="s4" viewBox="0 0 20 20"><path d="M2 6H14V18H2Z" fill="url(#gb)" stroke="#111" stroke-width="1.400"/><path d="M2 6L7 2H18V14L14 18" fill="none" stroke="#111" stroke-width="1.200"/><path d="M4 8L12 16M12 8L4 16" stroke="#e02020" stroke-width="2"/></symbol>
<symbol id="s5" viewBox="0 0 20 20"><path d="M3 13C0 7 4 2 9 2M16 6C19 12 15 18 11 18" fill="none" stroke="#2a6aa8" stroke-width="1.800"/><path d="M7 9L10 7H15V14L12 16H7Z" fill="url(#gb)" stroke="#111"/><path d="M7 9H12V16" fill="none" stroke="#111"/></symbol>
<symbol id="s6" viewBox="0 0 20 20"><path d="M3 17L7 6L12 8L14 17Z" fill="url(#gb)" stroke="#111" stroke-width="1.300"/><path d="M7 6L10 4L14 6L12 8" fill="#fff" stroke="#111"/><path d="M13 2L18 8M13 2V6M13 2H17" stroke="#123c6c" stroke-width="1.500" fill="none"/></symbol>
<symbol id="s7" viewBox="0 0 20 20"><path d="M2 9L5 7H10V14L7 17H2Z" fill="#5b86b5" stroke="#111"/><path d="M9 5L12 3H17V10L14 12H9Z" fill="#8fb0d2" stroke="#111"/><path d="M4 5C5 3 7 2 9 3" stroke="#123c6c" stroke-width="1.400" fill="none"/></symbol>
<symbol id="s8" viewBox="0 0 20 20"><path d="M2 4H5V7H2Z" fill="#1f5a9a"/><path d="M2 9H5V12H2Z" fill="#e02020"/><path d="M2 14H5V17H2Z" fill="#30a040"/><path d="M7 7L10 4H18V13L15 16H7Z" fill="#3ca060" stroke="#111"/><path d="M7 7H15V16" fill="none" stroke="#111"/></symbol>
</defs>
</svg>

<header class="title">
  <svg class="title-logo"><use href="#acad"/></svg>
  <span class="title-text">AutoCAD 2008 - [Dibujo2.dwg]</span>
  <span class="wbtn"><i class="glyph-min"></i></span>
  <span class="wbtn"><svg viewBox="0 0 14 14" class="glyph-x"><path d="M4 3V1.500H13V8H10.500" fill="none" stroke="#fff" stroke-width="1.400"/><path d="M1.500 4.500H10V12.500H1.500Z" fill="none" stroke="#fff" stroke-width="1.400"/><path d="M1 4.500H10.500" stroke="#fff" stroke-width="2"/></svg></span>
  <span class="wbtn wbtn-close"><svg viewBox="0 0 14 14" class="glyph-x"><path d="M2 2L12 12M12 2L2 12" stroke="#fff" stroke-width="2.400"/></svg></span>
</header>

<nav class="menu">
  <svg class="menu-logo" viewBox="0 0 16 16"><path d="M1 1H8L15 12V16H1Z" fill="#f4d020"/><path d="M1 1H8L12 7H1Z" fill="#2a6a88"/><path d="M3 2L5 4M5 2L3 4" stroke="#fff"/><path d="M1 1V16H15" stroke="#444" fill="none"/></svg>
  <div class="menu-items">
    <span>Archivo</span><span>Edición</span><span>Ver</span><span>Insertar</span><span>Formato</span><span>Herr.</span><span>Dibujo</span><span>Acotar</span><span>Modificar</span><span>Express</span><span>Ventana</span><span>?</span>
  </div>
  <div class="help-box">Escriba una pregunta para obtener ayuda</div>
  <div class="help-tools">
    <svg class="ht ht-find" viewBox="0 0 16 16"><circle cx="9.500" cy="6" r="4.500" fill="#e8f0f8" stroke="#3a6a9a" stroke-width="1.400"/><path d="M6 9.500L1.500 14" stroke="#2a5a8a" stroke-width="2.200"/></svg>
    <i class="caret caret-dark"></i>
    <svg class="ht" viewBox="0 0 16 16"><path d="M4 2C3 7 7 10 12 9Z" fill="#a8b8c8" stroke="#456"/><path d="M8 6L12 2M6 9L3 15H12L9 9" stroke="#456" fill="none"/></svg>
    <svg class="ht" viewBox="0 0 16 16"><path d="M8 1L10 6H15.500L11 9.500L12.800 15L8 11.500L3.200 15L5 9.500L.5 6H6Z" fill="#3a5f92"/></svg>
  </div>
  <div class="mdi"><span class="mdi-min"></span><span class="mdi-max"></span><span class="mdi-x">×</span></div>
</nav>

<div class="row row-a">
  <div class="tb tb-std">
    <i class="grip-v"></i>
    <span class="b"><svg class="ic"><use href="#new"/></svg></span><span class="b"><svg class="ic"><use href="#open"/></svg></span><span class="b"><svg class="ic"><use href="#save"/></svg></span><i class="sp"></i>
    <span class="b"><svg class="ic"><use href="#print"/></svg></span><span class="b"><svg class="ic"><use href="#prev"/></svg></span><span class="b"><svg class="ic"><use href="#pub"/></svg></span><span class="b"><svg class="ic"><use href="#web"/></svg></span><i class="sp"></i>
    <span class="b"><svg class="ic"><use href="#brush"/></svg></span><span class="b"><svg class="ic"><use href="#match"/></svg></span><i class="sp"></i>
    <span class="b"><svg class="ic"><use href="#undo"/></svg></span><span class="drop"><i class="caret caret-navy"></i></span><span class="b"><svg class="ic"><use href="#redo"/></svg></span><span class="drop"><i class="caret caret-grey"></i></span><i class="sp"></i>
    <span class="b"><svg class="ic"><use href="#dc"/></svg></span><span class="b"><svg class="ic"><use href="#prop"/></svg></span><span class="b"><svg class="ic"><use href="#tool"/></svg></span><span class="b"><svg class="ic"><use href="#sheet"/></svg></span><span class="b"><svg class="ic"><use href="#mark"/></svg></span><span class="b"><svg class="ic"><use href="#calc"/></svg></span><i class="sp"></i>
    <span class="b"><svg class="ic"><use href="#help"/></svg></span>
  </div>
  <div class="tb tb-3d">
    <i class="grip-v"></i>
    <span class="b"><svg class="ic"><use href="#psolid"/></svg></span><span class="b"><svg class="ic"><use href="#box"/></svg></span><span class="b"><svg class="ic"><use href="#wedge"/></svg></span><span class="b"><svg class="ic"><use href="#cone"/></svg></span><span class="b"><svg class="ic"><use href="#sphere"/></svg></span><span class="b"><svg class="ic"><use href="#cyl"/></svg></span><span class="b"><svg class="ic"><use href="#torus"/></svg></span><span class="b"><svg class="ic"><use href="#pyr"/></svg></span><span class="b"><svg class="ic"><use href="#helix"/></svg></span><span class="b"><svg class="ic"><use href="#planar"/></svg></span><i class="sp"></i>
    <span class="b"><svg class="ic"><use href="#extr"/></svg></span><span class="b"><svg class="ic"><use href="#press"/></svg></span><span class="b"><svg class="ic"><use href="#sweep"/></svg></span><span class="b"><svg class="ic"><use href="#rev"/></svg></span><span class="b"><svg class="ic"><use href="#loft"/></svg></span><i class="sp"></i>
    <span class="b"><svg class="ic"><use href="#union"/></svg></span><span class="b"><svg class="ic"><use href="#subt"/></svg></span><span class="b"><svg class="ic"><use href="#inter"/></svg></span><i class="sp"></i>
    <span class="b"><svg class="ic"><use href="#giz"/></svg></span><span class="b"><svg class="ic"><use href="#wrld"/></svg></span><span class="b"><svg class="ic"><use href="#flat"/></svg></span>
  </div>
  <div class="tb tb-view">
    <i class="grip-v"></i>
    <span class="b"><svg class="ic"><use href="#cam"/></svg></span><i class="sp"></i>
    <span class="b"><svg class="ic"><use href="#vt"/></svg></span><span class="b"><svg class="ic"><use href="#vb"/></svg></span><span class="b"><svg class="ic"><use href="#vl"/></svg></span><span class="b"><svg class="ic"><use href="#vr"/></svg></span><span class="b"><svg class="ic"><use href="#vf"/></svg></span><span class="b"><svg class="ic"><use href="#vk"/></svg></span><i class="sp"></i>
    <span class="b"><svg class="ic"><use href="#iso1"/></svg></span><span class="b"><svg class="ic"><use href="#iso2"/></svg></span><span class="b"><svg class="ic"><use href="#iso3"/></svg></span><span class="b"><svg class="ic"><use href="#iso4"/></svg></span>
  </div>
</div>

<div class="row row-b">
  <div class="tb tb-layers">
    <i class="grip-v"></i>
    <span class="b"><svg class="ic"><use href="#layers"/></svg></span>
    <div class="combo combo-layer">
      <svg class="li"><use href="#bulb"/></svg><svg class="li"><use href="#sun"/></svg><svg class="li"><use href="#frz"/></svg><svg class="li"><use href="#lock"/></svg>
      <i class="sq"></i><span class="combo-text combo-zero">0</span>
      <span class="arrow"><i class="chev"></i></span>
    </div>
    <span class="b b-after"><svg class="ic"><use href="#lcur"/></svg></span><span class="b"><svg class="ic"><use href="#lprev"/></svg></span><span class="b"><svg class="ic"><use href="#lstate"/></svg></span>
  </div>
  <div class="tb tb-props">
    <i class="grip-v"></i>
    <div class="combo combo-color"><i class="sq"></i><span class="combo-text">PorCapa</span><span class="arrow"><i class="chev"></i></span></div>
    <i class="grip-thin"></i>
    <div class="combo combo-ltype"><i class="swatch swatch-long"></i><span class="combo-text">PorCapa</span><span class="arrow"><i class="chev"></i></span></div>
    <div class="combo combo-lw"><i class="swatch swatch-short"></i><span class="combo-text">PorCapa</span><span class="arrow"><i class="chev"></i></span></div>
    <div class="combo combo-plot"><span class="combo-text">PorColor</span><span class="arrow arrow-off"><i class="chev chev-off"></i></span></div>
  </div>
  <div class="tb tb-solid">
    <i class="grip-v"></i>
    <span class="b"><svg class="ic"><use href="#union"/></svg></span><span class="b"><svg class="ic"><use href="#subt"/></svg></span><span class="b"><svg class="ic"><use href="#inter"/></svg></span><i class="sp"></i>
    <span class="b"><svg class="ic"><use href="#s1"/></svg></span><span class="b"><svg class="ic"><use href="#s2"/></svg></span><span class="b"><svg class="ic"><use href="#s3"/></svg></span><span class="b"><svg class="ic"><use href="#s4"/></svg></span><span class="b"><svg class="ic"><use href="#s5"/></svg></span><span class="b"><svg class="ic"><use href="#s6"/></svg></span><span class="b"><svg class="ic"><use href="#s7"/></svg></span><span class="b"><svg class="ic"><use href="#s8"/></svg></span>
  </div>
</div>

<main class="work">
  <aside class="left">
    <div class="col">
      <div class="vtb vtb-draw">
        <i class="grip-h"></i>
        <span class="v"><svg class="ic"><use href="#ln"/></svg></span><span class="v"><svg class="ic"><use href="#xl"/></svg></span><span class="v"><svg class="ic"><use href="#pl"/></svg></span><span class="v"><svg class="ic"><use href="#pg"/></svg></span><span class="v"><svg class="ic"><use href="#rc"/></svg></span><span class="v"><svg class="ic"><use href="#ar"/></svg></span><span class="v"><svg class="ic"><use href="#ci"/></svg></span><span class="v"><svg class="ic"><use href="#cl"/></svg></span><span class="v"><svg class="ic"><use href="#sp"/></svg></span><span class="v"><svg class="ic"><use href="#el"/></svg></span><span class="v"><svg class="ic"><use href="#ea"/></svg></span><span class="v"><svg class="ic"><use href="#ins"/></svg></span><span class="v"><svg class="ic"><use href="#blk"/></svg></span><span class="v"><svg class="ic"><use href="#pt"/></svg></span><span class="v"><svg class="ic"><use href="#hat"/></svg></span><span class="v"><svg class="ic"><use href="#grd"/></svg></span><span class="v"><svg class="ic"><use href="#reg"/></svg></span><span class="v"><svg class="ic"><use href="#tbl"/></svg></span><span class="v"><svg class="ic"><use href="#txt"/></svg></span>
      </div>
      <div class="vtb vtb-orbit">
        <i class="grip-h"></i>
        <span class="v"><svg class="ic"><use href="#orb"/></svg></span><span class="v"><svg class="ic"><use href="#plan"/></svg></span><span class="v"><svg class="ic"><use href="#walk"/></svg></span>
      </div>
    </div>
    <div class="vtb vtb-dim">
      <i class="grip-h"></i>
      <span class="v"><svg class="ic"><use href="#d1"/></svg></span><span class="v"><svg class="ic"><use href="#d2"/></svg></span><span class="v"><svg class="ic"><use href="#d3"/></svg></span><span class="v"><svg class="ic"><use href="#d4"/></svg></span><i class="sp-h"></i>
      <span class="v"><svg class="ic"><use href="#d5"/></svg></span><span class="v"><svg class="ic"><use href="#d6"/></svg></span><span class="v"><svg class="ic"><use href="#d7"/></svg></span><span class="v"><svg class="ic"><use href="#d8"/></svg></span><i class="sp-h"></i>
      <span class="v"><svg class="ic"><use href="#d9"/></svg></span><span class="v"><svg class="ic"><use href="#d10"/></svg></span><span class="v"><svg class="ic"><use href="#d11"/></svg></span><span class="v"><svg class="ic"><use href="#d12"/></svg></span><span class="v"><svg class="ic"><use href="#d13"/></svg></span><i class="sp-h"></i>
      <span class="v"><svg class="ic"><use href="#d14"/></svg></span><span class="v"><svg class="ic"><use href="#d15"/></svg></span><span class="v"><svg class="ic"><use href="#d16"/></svg></span><span class="v"><svg class="ic"><use href="#d17"/></svg></span><i class="sp-h"></i>
      <span class="v"><svg class="ic"><use href="#d18"/></svg></span><span class="v"><svg class="ic"><use href="#d19"/></svg></span><span class="v"><svg class="ic"><use href="#d20"/></svg></span><i class="sp-h"></i>
      <span class="v"><svg class="ic"><use href="#d21"/></svg></span>
    </div>
  </aside>

  <section class="draw">
    <div class="canvas">
      <svg class="drawing" viewBox="53 103 1199 549" shape-rendering="crispEdges">
        <defs>
          <g id="truss" fill="none" stroke="#0000ff">
            <path d="M.5 343.500V446.500" stroke="#9a9a9a" stroke-dasharray="1 3"/>
            <path d="M.5 446.500H7.500V458.500L37 523L38.500 523.500V528.500L37 529L7.500 593.500V605.500H.5Z" shape-rendering="auto"/>
            <path d="M7.500 469.500V522.500H33.500ZM7.500 528.500H33.500L7.500 583.500Z" shape-rendering="auto"/>
            <path d="M33 522.500H37V528.500" shape-rendering="auto"/>
            <path d="M.5 181V340"/>
          </g>
        </defs>
        <rect x="184.500" y="180.500" width="973" height="160" fill="none" stroke="#ff0000"/>
        <rect x="192.500" y="188.500" width="957" height="144" fill="none" stroke="#ff0000"/>
        <use href="#truss" x="281"/><use href="#truss" x="379"/><use href="#truss" x="476"/><use href="#truss" x="573"/><use href="#truss" x="670"/><use href="#truss" x="768"/><use href="#truss" x="865"/><use href="#truss" x="962"/><use href="#truss" x="1060"/>
        <g fill="none" stroke="#ffffff" shape-rendering="auto">
          <rect x="64.500" y="629.500" width="10" height="10"/>
          <path d="M69.500 629V582M65 582.500H74L69.500 568ZM69.500 570V582M68 576V582M71 576V582"/>
          <path d="M75 634.500H122M122.500 630V639L135 634.500ZM124 634.500H133M126 632.500H128M126 636.500H128"/>
          <path d="M66 545L71.500 552L77 545M71.500 552V560"/>
          <path d="M146 628L156 641M156 628L146 641"/>
        </g>
      </svg>
      <aside class="palette">
        <svg class="pal-x" viewBox="0 0 14 14"><path d="M1 1L13 13M13 1L1 13" stroke="#dfe6fa" stroke-width="2"/></svg>
        <svg class="pal-ic"><use href="#dc"/></svg>
        <span class="pal-label">PROPIEDADES</span>
        <svg class="pal-tog" viewBox="0 0 16 14"><path d="M0 0H16V14H0Z" fill="#c6d2f2"/><path d="M3 0V14" stroke="#7f96dc" stroke-width="1.500"/><path d="M6 1L15 7L6 13Z" fill="#6f88d6"/></svg>
        <svg class="pal-tog" viewBox="0 0 16 16"><path d="M0 0H16V2H0ZM0 4H16V16H0Z" fill="#c6d2f2"/><path d="M4 7H12V14H4Z" fill="#7f96dc"/><path d="M5 9H11M5 11H11" stroke="#c6d2f2"/></svg>
      </aside>
    </div>
    <div class="tabs">
      <div class="tab-nav">
        <span class="nav"><i class="nv nv-first"></i></span><span class="nav"><i class="nv nv-prev"></i></span><span class="nav"><i class="nv nv-next"></i></span><span class="nav"><i class="nv nv-last"></i></span>
      </div>
      <span class="tab tab-on">Modelo</span>
      <span class="tab tab-first">Presentación1</span>
      <span class="tab">Presentación2</span>
    </div>
  </section>

  <aside class="right">
    <div class="vtb vtb-mod">
      <i class="grip-h"></i>
      <span class="v"><svg class="ic"><use href="#r1"/></svg></span><span class="v"><svg class="ic"><use href="#r2"/></svg></span><span class="v"><svg class="ic"><use href="#r3"/></svg></span><span class="v"><svg class="ic"><use href="#r4"/></svg></span><span class="v"><svg class="ic"><use href="#r5"/></svg></span><span class="v"><svg class="ic"><use href="#r6"/></svg></span><span class="v"><svg class="ic"><use href="#r7"/></svg></span><span class="v"><svg class="ic"><use href="#r8"/></svg></span><span class="v"><svg class="ic"><use href="#r9"/></svg></span><span class="v"><svg class="ic"><use href="#r10"/></svg></span><span class="v"><svg class="ic"><use href="#r11"/></svg></span><span class="v"><svg class="ic"><use href="#r12"/></svg></span><span class="v"><svg class="ic"><use href="#r13"/></svg></span><span class="v"><svg class="ic"><use href="#r14"/></svg></span><span class="v"><svg class="ic"><use href="#r15"/></svg></span><span class="v"><svg class="ic"><use href="#r16"/></svg></span><span class="v"><svg class="ic"><use href="#r17"/></svg></span>
    </div>
    <div class="vtb vtb-order">
      <i class="grip-h"></i>
      <span class="v"><svg class="ic"><use href="#o1"/></svg></span><span class="v"><svg class="ic"><use href="#o2"/></svg></span><span class="v"><svg class="ic"><use href="#o3"/></svg></span><span class="v"><svg class="ic"><use href="#o4"/></svg></span>
    </div>
    <div class="vtb vtb-text">
      <i class="grip-h"></i>
      <span class="v"><svg class="ic"><use href="#t1"/></svg></span><span class="v"><svg class="ic"><use href="#t2"/></svg></span><span class="v"><svg class="ic"><use href="#t3"/></svg></span>
    </div>
  </aside>
</main>

<section class="cmd">
  <div class="cmd-rule"></div>
  <div class="cmd-row">
    <i class="grip-cmd"></i>
    <div class="cmd-box">
      <div class="cmd-log">
        <div class="cmd-lines">Comando: regen<br>Regenerando modelo.</div>
      </div>
      <div class="cmd-input">
        <span class="cmd-prompt">Comando:</span>
        <div class="hscroll">
          <span class="sb"><i class="chev chev-l"></i></span><span class="sb sb-thumb"><i class="thumb-lines"></i></span><span class="hs-track"></span><span class="sb"><i class="chev chev-r"></i></span>
        </div>
      </div>
    </div>
    <div class="vscroll">
      <span class="sb"><i class="chev chev-u"></i></span>
      <span class="sb"><i class="chev chev-d"></i></span>
    </div>
  </div>
</section>

<footer class="status">
  <span class="coords">445.3160, 234.3574, 0.0000</span>
  <div class="st-group">
    <span class="st">FORZC</span><span class="st">REJILLA</span><span class="st st-on">ORTO</span><span class="st">POLAR</span><span class="st st-on">REFENT</span><span class="st">RASTREO</span><span class="st st-on">DUCS</span><span class="st">DIN</span><span class="st">GLN</span>
  </div>
  <span class="anno">Escala de anotación:</span>
  <span class="anno-val">1:1</span><i class="caret caret-black"></i>
  <svg class="st-ic st-ic-a" viewBox="0 0 16 16"><path d="M7 3L1 15H13Z" fill="none" stroke="#2a5a9a" stroke-width="1.500"/><path d="M4 12H11M7 6L9 13" stroke="#2a5a9a"/><circle cx="11" cy="5" r="3.500" fill="#f8e860"/></svg>
  <svg class="st-ic" viewBox="0 0 16 16"><path d="M7 3L1 15H13Z" fill="none" stroke="#a0a098" stroke-width="1.500"/><path d="M6 11L14 2" stroke="#909088" stroke-width="2.500"/></svg>
  <span class="st-lock"><svg viewBox="0 0 18 18"><path d="M9 8V4C9 0 17 0 17 4V7" fill="none" stroke="#b08800" stroke-width="2"/><path d="M1 7H12V17H1Z" fill="#d8c020" stroke="#333"/><path d="M1 10H12M1 13H12" stroke="#333"/></svg></span>
  <i class="caret caret-black caret-lock"></i>
  <span class="st-win"></span>
</footer>

<div class="task">
  <div class="start">
    <svg class="flag" viewBox="0 0 16 16"><path d="M1 3C3 2 5 2 7 3L6.500 7.500C5 6.800 3 6.800 .5 7.500Z" fill="#e8502c"/><path d="M8 3.500C10 4.300 12 4.300 15 3L14 7.500C12 8.500 10 8.500 7.500 7.500Z" fill="#72b830"/><path d="M.5 8.500C3 7.800 5 7.800 6.500 8.500L6 13C4 12.300 2 12.300 0 13Z" fill="#3a8ae8"/><path d="M7.500 8.500C10 9.500 12 9.500 14 8.500L13.500 13C11 14 9 14 7 13Z" fill="#f8c820"/></svg>
    <span class="start-text">Inicio</span>
  </div>
  <div class="quick">
    <svg class="qi"><use href="#ie"/></svg>
    <svg class="qi" viewBox="0 0 18 18"><path d="M4 3H14V16H4Z" fill="#e8eef8" stroke="#123c6c"/><circle cx="9" cy="9" r="4" fill="#fff" stroke="#123c6c" stroke-width="1.300"/><path d="M9 6V9H11" stroke="#123c6c"/><path d="M13 6H17V10H13Z" fill="#e04020"/></svg>
  </div>
  <div class="tsk">
    <svg class="ti"><use href="#ie"/></svg>
    <span>#instructableId=EH2...</span>
  </div>
  <div class="tsk">
    <svg class="ti"><use href="#acad"/></svg>
    <span>AutoCAD 2008 - [Dib...</span>
  </div>
  <div class="task-right">
    <span class="desk">Escritorio</span><span class="chevs">»</span>
    <span class="lang">ES</span>
    <span class="desk">Escritorio</span><span class="chevs">»</span>
  </div>
  <div class="tray">
    <span class="tray-back"><svg viewBox="0 0 10 10"><path d="M6.500 1.500L3 5L6.500 8.500" fill="none" stroke="#fff" stroke-width="2"/></svg></span>
    <svg class="tr tr-first" viewBox="0 0 18 18"><path d="M1 4H8V12H1Z" fill="#c8dcf8" stroke="#345"/><path d="M3 14H9" stroke="#cde" stroke-width="2"/><path d="M11 3C13 5 13 8 11 10M14 1C17 4 17 9 14 12" stroke="#60e040" fill="none" stroke-width="1.400"/></svg>
    <svg class="tr" viewBox="0 0 18 18"><path d="M9 1C12 3 14 3 16 3C16 10 14 14 9 17C4 14 2 10 2 3C4 3 6 3 9 1Z" fill="#f8d020" stroke="#445"/><path d="M9 5V10M9 12V14" stroke="#333" stroke-width="2"/></svg>
    <svg class="tr" viewBox="0 0 18 18"><path d="M5 1H13V9H5Z" fill="#405878"/><path d="M1 7H9V15H1Z" fill="#708098" stroke="#234"/><path d="M9 9L17 17M17 9L9 17" stroke="#e02020" stroke-width="2.400"/></svg>
    <svg class="tr" viewBox="0 0 18 18"><path d="M5 1L9 4L13 1L17 4L13 7L17 10L13 13L9 10L5 13L1 10L5 7L1 4Z" fill="#9ccaf0"/><circle cx="12" cy="12" r="4.500" fill="#30b040"/><path d="M10 12L12 14L14 10" stroke="#fff" fill="none"/></svg>
    <svg class="tr" viewBox="0 0 18 18"><circle cx="8" cy="8" r="7" fill="#334"/><circle cx="8" cy="8" r="3" fill="#aab"/><circle cx="13" cy="13" r="4" fill="#e02020"/><path d="M11 13H15" stroke="#fff" stroke-width="1.500"/></svg>
    <svg class="tr" viewBox="0 0 18 18"><circle cx="9" cy="9" r="8" fill="#1a3a7a"/><path d="M3 16L9 3L15 16" fill="none" stroke="#e8d020" stroke-width="2"/><path d="M7 15L9 8L11 15" fill="none" stroke="#80c0f0" stroke-width="1.500"/></svg>
    <svg class="tr" viewBox="0 0 18 18"><circle cx="9" cy="9" r="8.500" fill="#f07818"/><path d="M5 10A4.500 4.500 0 1 1 11 13" fill="none" stroke="#fff" stroke-width="2.400"/></svg>
    <svg class="tr" viewBox="0 0 18 18"><path d="M2 2H16V13H2Z" fill="#6a7480" stroke="#ccc"/><path d="M2 15H7M11 15H16" stroke="#ccc" stroke-width="2"/></svg>
    <span class="clock">10:53</span>
  </div>
</div>
</body>
</html>
```
FILE: styles.css
```css
* { box-sizing: border-box; }
html, body { margin: 0; padding: 0; }
body {
  width: 1280px; height: 800px; overflow: hidden;
  display: flex; flex-direction: column;
  background: #ece9d8; color: #000;
  font-family: Roboto, "Open Sans", sans-serif; font-size: 11px;
}
i { display: block; font-style: normal; }
.defs { position: absolute; }

.title {
  height: 26px; flex: none; display: flex; align-items: center; padding: 0 3px 0 4px;
  background: linear-gradient(#9db2e8 0, #7f9be2 2px, #7893df 6px, #7793e0 16px, #7e9de8 22px, #7496dc 26px);
}
.title-logo { width: 16px; height: 16px; flex: none; }
.title-text {
  margin-left: 2px; flex: 1;
  font: 700 13px "Open Sans", sans-serif; letter-spacing: -.05px; color: #d9e3f8;
  white-space: nowrap;
}
.wbtn {
  width: 20px; height: 20px; margin-left: 3px; flex: none; display: flex; align-items: center; justify-content: center;
  border: 1px solid #e6ecfb; border-radius: 3px; background: linear-gradient(135deg, #6f8ee8, #4a6fd8);
}
.wbtn-close { background: linear-gradient(135deg, #c07c86, #a4606e); }
.glyph-min { width: 8px; height: 3px; background: #fff; margin-top: 8px; margin-right: 2px; }
.glyph-x { width: 14px; height: 14px; }

.menu { height: 20px; flex: none; display: flex; align-items: center; padding-left: 5px; }
.menu-logo { width: 15px; height: 17px; flex: none; }
.menu-items {
  width: 934px; margin-left: 6px; flex: none; display: grid; color: #a3a094;
  grid-template-columns: 47px 45px 28px 51px 52px 37px 42px 44px 55px 50px 52px auto;
  font-size: 11px; white-space: nowrap;
}
.help-box {
  width: 201px; height: 20px; flex: none; margin-left: -6px;
  border-left: 1px solid #7f9db9; padding: 3px 0 0 3px;
  color: #a3a094; font-size: 10.700px; white-space: nowrap; overflow: hidden;
}
.help-tools {
  width: 63px; height: 18px; flex: none; display: flex; align-items: center;
  border: 1px solid #b9b69f; border-radius: 4px; padding-left: 1px; background: #ece9d8;
}
.ht { width: 14px; height: 14px; flex: none; margin: 0 2px 0 2px; }
.ht-find { margin-right: 4px; }
.caret { width: 0; height: 0; border: 3px solid transparent; border-bottom-width: 0; border-top-width: 4px; }
.caret-dark { border-top-color: #333; margin-right: 3px; }
.caret-navy { border-top-color: #123c6c; }
.caret-grey { border-top-color: #b4b4ae; }
.caret-black { border-top-color: #000; border-width: 4px 5px 0; }
.mdi { display: flex; margin-left: 6px; gap: 5px; align-items: center; color: #c9c6b6; }
.mdi-min { width: 14px; height: 14px; border-bottom: 2px solid #c9c6b6; margin: 0 1px; transform: scaleX(.6); }
.mdi-max { width: 12px; height: 12px; border: 1px solid #c9c6b6; border-top-width: 2px; }
.mdi-x { font: 700 15px/14px "Liberation Sans", sans-serif; margin-left: 3px; }

.row { flex: none; display: flex; overflow: hidden; }
.row-a { height: 27px; border-top: 1px solid #fff; align-items: flex-start; }
.row-b { height: 30px; padding-top: 3px; align-items: flex-start; border-bottom: 2px solid #7f7d72; }
.tb {
  flex: none; display: flex; align-items: center; position: relative;
  border-bottom: 1px solid #bcb9a5;
}
.row-a .tb { height: 26px; }
.row-b .tb { height: 26px; }
.tb-std { width: 486px; padding-left: 2px; border-right: 1px solid #bcb9a5; }
.tb-std .grip-v { margin-right: 4px; }
.tb-3d { width: 521px; padding-left: 2px; border-right: 1px solid #bcb9a5; }
.tb-3d .grip-v { margin-right: 4px; width: 8px; }
.tb-view { flex: 1; padding-left: 2px; }
.tb-view .grip-v { margin-right: 4px; }
.tb-layers { width: 409px; padding-left: 2px; border-right: 1px solid #bcb9a5; }
.tb-layers .grip-v { margin-right: 4px; }
.tb-props { width: 596px; padding-left: 3px; border-right: 1px solid #bcb9a5; }
.tb-props .grip-v { margin-right: 3px; }
.tb-solid { flex: 1; padding-left: 1px; }
.tb-solid .grip-v { margin-right: 1px; }
.grip-v {
  width: 7px; height: 24px; flex: none;
  border-left: 1px solid #fff; border-right: 1px solid #a9a692;
  background: linear-gradient(90deg, #fff 0 1px, #d3d0bc 1px 2px, #ece9d8 2px 3px, #fff 3px 4px, #d3d0bc 4px 5px);
}
.grip-thin { width: 3px; height: 24px; flex: none; margin: 0 2px; border-left: 1px solid #fff; border-right: 1px solid #a9a692; }
.b { width: 23px; height: 24px; flex: none; display: flex; align-items: center; justify-content: center; }
.b-after { margin-left: 0; }
.drop { width: 13px; height: 24px; flex: none; display: flex; align-items: center; justify-content: center; }
.ic { width: 20px; height: 20px; display: block; flex: none; }
.sp { width: 6px; height: 20px; flex: none; background: linear-gradient(#bcb9a5, #bcb9a5) center / 1px 100% no-repeat; }

.combo {
  height: 21px; flex: none; display: flex; align-items: center; background: #fff;
  border: 1px solid #7f9db9; padding-left: 3px; position: relative; font-size: 11.500px; white-space: nowrap;
}
.combo-layer { width: 299px; padding-left: 3px; }
.combo-color { width: 150px; }
.combo-ltype { width: 159px; }
.combo-lw { width: 124px; margin-left: 7px; }
.combo-plot { width: 118px; margin-left: 8px; background: #ece9d8; border-color: #c9c6b6; color: #a3a094; padding-left: 9px; }
.combo-text { flex: none; }
.combo-zero { margin-left: 6px; }
.li { width: 16px; height: 16px; flex: none; }
.sq { width: 11px; height: 11px; border: 1px solid #000; flex: none; background: #fff; margin: 0 5px 0 0; }
.combo-layer .sq { margin-right: 0; margin-left: 4px; }
.combo-color .sq { margin-left: 2px; }
.swatch { height: 1px; background: #000; flex: none; }
.swatch-long { width: 60px; margin: 0 6px 0 1px; }
.swatch-short { width: 35px; margin: 0 6px 0 1px; }
.arrow {
  position: absolute; right: 0; top: 0; bottom: 0; width: 16px; display: flex; align-items: center; justify-content: center;
  background: linear-gradient(135deg, #dce6fd, #b3c8f6); border: 1px solid #fff;
}
.arrow-off { background: #e4e2d6; }
.chev { width: 6px; height: 6px; border: solid #4d6185; border-width: 0 2px 2px 0; transform: rotate(45deg) translate(-1px, -1px); }
.chev-off { border-color: #c9c6b6; }
.chev-u { transform: rotate(-135deg) translate(-1px, -1px); }
.chev-d { transform: rotate(45deg) translate(-1px, -1px); }
.chev-l { transform: rotate(135deg) translate(-1px, -1px); }
.chev-r { transform: rotate(-45deg) translate(-1px, -1px); }

.work { height: 567px; flex: none; display: flex; overflow: hidden; }
.left { width: 53px; flex: none; display: flex; align-items: flex-start; }
.col { width: 26px; flex: none; display: flex; flex-direction: column; gap: 2px; }
.vtb {
  width: 25px; flex: none; display: flex; flex-direction: column; align-items: center;
  border-right: 1px solid #bcb9a5; border-bottom: 1px solid #bcb9a5;
}
.vtb-dim { height: 508px; }
.vtb-draw { height: 433px; }
.vtb-orbit { height: 83px; }
.grip-h {
  width: 20px; height: 8px; margin: 1px 0; flex: none;
  border-top: 1px solid #fff; border-bottom: 1px solid #a9a692;
  background: linear-gradient(#d3d0bc 0 1px, #ece9d8 1px 2px, #fff 2px 3px, #d3d0bc 3px 4px, #ece9d8 4px);
}
.v { width: 24px; height: 22px; flex: none; display: flex; align-items: center; justify-content: center; }
.sp-h { width: 20px; height: 6px; flex: none; background: linear-gradient(#bcb9a5, #bcb9a5) center / 100% 1px no-repeat; }

.draw { width: 1199px; flex: none; display: flex; flex-direction: column; }
.canvas { height: 549px; flex: none; position: relative; background: #000; }
.drawing { display: block; width: 1199px; height: 549px; }
.palette {
  position: absolute; left: 35px; top: 2px; width: 26px; height: 426px;
  background: #7f96dc; border-right: 2px solid #8a8a8a; border-bottom: 2px solid #8a8a8a; border-left: 1px solid #9aa;
  display: flex; flex-direction: column; align-items: center; padding-bottom: 5px;
}
.pal-x { width: 14px; height: 14px; margin-top: 3px; flex: none; }
.pal-ic { width: 16px; height: 16px; margin-top: 4px; flex: none; }
.pal-label {
  writing-mode: vertical-rl; transform: rotate(180deg); margin-top: auto; margin-bottom: 11px;
  color: #d5def8; font: 600 12px "Open Sans", sans-serif; line-height: 14px; letter-spacing: .15px;
}
.pal-tog { width: 15px; height: 14px; flex: none; margin-bottom: 9px; }
.pal-tog:last-child { height: 15px; margin-bottom: 0; }

.tabs { height: 18px; flex: none; display: flex; align-items: stretch; border-bottom: 1px solid #8f8d80; font-size: 10.500px; }
.tab-nav { display: flex; width: 62px; flex: none; margin-left: 1px; }
.nav { width: 15px; height: 15px; flex: none; border: 1px solid #c9c6b6; display: flex; align-items: center; justify-content: center; }
.nv { width: 0; height: 0; border: 4px solid transparent; }
.nv-first, .nv-prev { border-right: 5px solid #a3a094; border-left: 0; }
.nv-next, .nv-last { border-left: 5px solid #a3a094; border-right: 0; }
.tab { padding: 1px 6px 0 6px; line-height: 16px; margin-left: 6px; clip-path: polygon(3px 0, 100% 0, calc(100% - 3px) 100%, 0 100%); background: #ece9d8; border-bottom: 1px solid #555; white-space: nowrap; }
.tab-first { margin-left: 0; }
.tab-on { margin-left: 0; width: 56px; padding-left: 11px; background: #000; color: #fff; clip-path: polygon(0 0, 100% 0, calc(100% - 6px) 100%, 6px 100%); }

.right { width: 28px; flex: none; padding-left: 3px; display: flex; flex-direction: column; }
.right .vtb { margin-bottom: 1px; }
.vtb-mod { height: 389px; }
.vtb-order { height: 105px; }
.vtb-order .grip-h { margin: 1px 0 2px; }
.vtb-text { flex: 1; overflow: hidden; }
.vtb-text .grip-h { margin: 3px 0 2px; }
.vtb-text .v:last-child { height: 18px; }

.cmd { height: 80px; flex: none; padding-top: 5px; }
.cmd-rule { height: 2px; background: #111; border-top: 1px solid #111; }
.cmd-row { display: flex; margin-top: 9px; height: 60px; padding-left: 6px; }
.grip-cmd {
  width: 8px; flex: none; margin-top: 1px; height: 56px;
  background: linear-gradient(90deg, #fff 0 1px, #c9c6b6 1px 2px, #ece9d8 2px 4px, #fff 4px 5px, #c9c6b6 5px 6px);
}
.cmd-box {
  width: 1240px; margin-left: 2px; flex: none; display: flex; flex-direction: column;
  border-left: 1px solid #333; border-top: 1px solid #333; background: #fff;
  font: 13px/16px "Liberation Mono", monospace; letter-spacing: .2px;
}
.cmd-log { height: 39px; flex: none; border-bottom: 1px solid #9c9a90; padding: 1px 0 0 1px; }
.cmd-input { flex: 1; display: flex; align-items: flex-start; justify-content: space-between; padding-left: 1px; padding-top: 2px; border-bottom: 1px solid #c9c6b6; }
.cmd-prompt { flex: none; }
.hscroll { width: 66px; height: 19px; flex: none; margin-top: -2px; display: flex; align-items: center; background: #ece9d8; padding: 1px 2px 1px 1px; }
.sb {
  width: 15px; height: 15px; flex: none; display: flex; align-items: center; justify-content: center;
  background: linear-gradient(135deg, #e1eafe, #b3c8f6); border: 1px solid #fff; border-radius: 2px; box-shadow: 0 0 0 1px #c6d4f2;
}
.sb-thumb { margin-left: 1px; }
.hs-track { width: 17px; height: 15px; flex: none; background: #f4f3ec; }
.thumb-lines { width: 7px; height: 7px; background: repeating-linear-gradient(90deg, #8ba0ca 0 1px, transparent 1px 2px); }
.vscroll { width: 17px; margin-left: 1px; flex: none; display: flex; flex-direction: column; gap: 6px; padding: 2px 0 0 0; }

.status { height: 20px; flex: none; display: flex; align-items: center; padding-left: 5px; font-size: 11.500px; border-top: 1px solid #fff; }
.coords { width: 165px; height: 17px; flex: none; border: 1px solid #aca899; color: #a3a094; padding-left: 1px; line-height: 15px; font-size: 11.500px; margin-right: 5px; white-space: nowrap; }
.st-group { display: grid; flex: none; grid-template-columns: 38px 46px 35px 40px 47px 56px 34px 23px 25px; column-gap: 4px; }
.st { height: 17px; border: 1px solid; border-color: #fff #aca899 #aca899 #fff; line-height: 15px; text-align: center; font-size: 11.500px; white-space: nowrap; }
.st-on { border-color: #555 #fff #fff #555; padding-top: 1px; }
.anno { margin-left: auto; white-space: nowrap; flex: none; font-size: 11px; }
.anno-val { margin-left: 9px; width: 14px; flex: none; white-space: nowrap; }
.status .caret-black { margin: 0 0 0 4px; flex: none; }
.st-ic { width: 16px; height: 16px; margin-left: 10px; flex: none; }
.st-ic-a { margin-left: 7px; }
.st-lock { width: 22px; height: 17px; margin-left: 6px; background: #fff; border: 1px solid #aca899; flex: none; display: flex; justify-content: center; }
.st-lock svg { width: 16px; height: 15px; }
.status .caret-lock { margin: 4px 0 0 5px; }
.st-win { width: 16px; height: 16px; margin: 0 3px 0 9px; border: 2px solid #1c4a88; background: linear-gradient(135deg, #e4f0fb, #8fb8e4); flex: none; }

.task {
  height: 30px; flex: none; display: flex; align-items: center; color: #fff; overflow: hidden;
  background: linear-gradient(#2a5cd8 0, #3f8cf3 2px, #245edb 6px, #2560dc 22px, #1c4fc0 30px);
}
.start {
  width: 102px; height: 30px; flex: none; display: flex; align-items: center; padding-left: 10px;
  background: linear-gradient(#4a9a4a, #3b8f3b 20%, #388a38 80%, #2e6e2e);
  border-radius: 0 10px 10px 0; box-shadow: inset -2px 0 3px #205a20;
}
.flag { width: 19px; height: 19px; flex: none; }
.start-text { margin-left: 5px; font: italic 700 18px "Liberation Sans", sans-serif; text-shadow: 1px 1px 1px #1a4a1a; }
.quick { width: 63px; flex: none; display: flex; gap: 6px; padding-left: 11px; }
.qi { width: 18px; height: 18px; flex: none; }
.tsk {
  width: 158px; height: 24px; margin-right: 2px; flex: none; display: flex; align-items: center; padding-left: 9px; gap: 3px;
  background: #3c81f3; border-radius: 2px; box-shadow: inset 1px 1px 0 #5a9af8; font-size: 11.500px; white-space: nowrap;
}
.ti { width: 16px; height: 16px; flex: none; }
.task-right { margin-left: auto; padding-right: 4px; flex: none; display: flex; align-items: center; font-size: 11px; }
.desk { color: #8fb0ec; }
.chevs { color: #9cc0f4; font-size: 13px; margin: -8px 11px 0 8px; }
.chevs:last-child { margin-right: 10px; }
.lang { background: #2d63cc; padding: 4px 1px; width: 15px; margin: 0 8px 0 0; color: #eaf0ff; font-size: 11.500px; }
.tray {
  width: 201px; height: 30px; flex: none; display: flex; align-items: center; position: relative; padding-left: 7px;
  background: linear-gradient(#0f72d8, #1496ee 3px, #1290e8 24px, #0c7ad8 30px); border-left: 1px solid #0a50a8;
}
.tray-back { width: 19px; height: 19px; margin-left: -17px; border: 2px solid #cfe4fb; border-radius: 50%; background: #2d6ad8; flex: none; display: flex; }
.tray-back svg { width: 15px; height: 15px; }
.tr { width: 17px; height: 17px; margin: 0 1px; flex: none; }
.tr-first { margin-left: -3px; }
.clock { margin-left: 4px; font-size: 11.500px; flex: none; white-space: nowrap; }
```
